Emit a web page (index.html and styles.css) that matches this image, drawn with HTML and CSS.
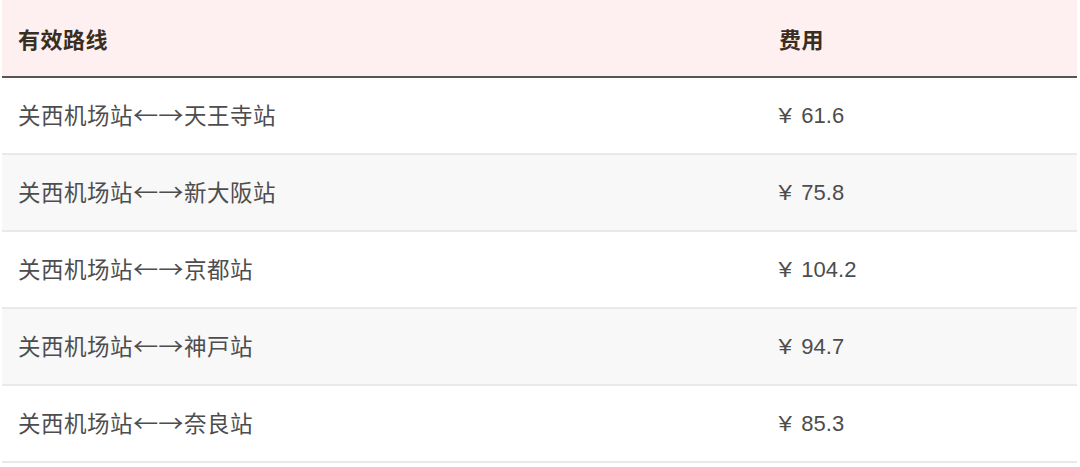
FILE: index.html
```html
<!DOCTYPE html>
<html lang="zh">
<head>
<meta charset="utf-8">
<link rel="stylesheet" href="styles.css">
</head>
<body>
<table class="fare">
  <thead>
    <tr><th class="c-route">有效路线</th><th class="c-fee">费用</th></tr>
  </thead>
  <tbody>
    <tr><td class="route">关西机场站<span class="arr">←→</span>天王寺站</td><td class="num"><span class="yen">¥</span> 61.6</td></tr>
    <tr><td class="route">关西机场站<span class="arr">←→</span>新大阪站</td><td class="num"><span class="yen">¥</span> 75.8</td></tr>
    <tr><td class="route">关西机场站<span class="arr">←→</span>京都站</td><td class="num"><span class="yen">¥</span> 104.2</td></tr>
    <tr><td class="route">关西机场站<span class="arr">←→</span>神戸站</td><td class="num"><span class="yen">¥</span> 94.7</td></tr>
    <tr><td class="route">关西机场站<span class="arr">←→</span>奈良站</td><td class="num"><span class="yen">¥</span> 85.3</td></tr>
  </tbody>
</table>
</body>
</html>
```
FILE: styles.css
```css
html, body { margin: 0; padding: 0; background: #fff; }
body { padding: 0 3px 0 2px; font-family: "Noto Sans CJK SC", "Liberation Sans", sans-serif; }
.fare { width: 100%; border-collapse: collapse; table-layout: fixed; }
.fare th, .fare td { text-align: left; padding: 0 0 0 16px; font-size: 22px; }
.fare thead tr { background: #fef0f0; }
.fare th { height: 76px; font-weight: bold; color: #3a2e22; border-bottom: 2px solid #555; letter-spacing: 0.5px; }
.fare .c-route { width: 745px; }
.fare td { height: 75px; color: #4d4d4d; border-bottom: 2px solid #e9e9e9; }
.fare td.route { font-size: 22.5px; letter-spacing: 0.5px; padding-bottom: 3px; height: 72px; }
.fare .arr { display: inline-block; letter-spacing: 0; margin-right: 6px; transform: scaleX(1.12); transform-origin: left center; }
.fare td.num { font-family: "Liberation Sans", "Noto Sans CJK SC", sans-serif; }
.fare .yen { display: inline-block; margin-right: 4px; transform: scaleX(1.1); }
.fare tbody tr:nth-child(even) { background: #f8f8f8; }
```
